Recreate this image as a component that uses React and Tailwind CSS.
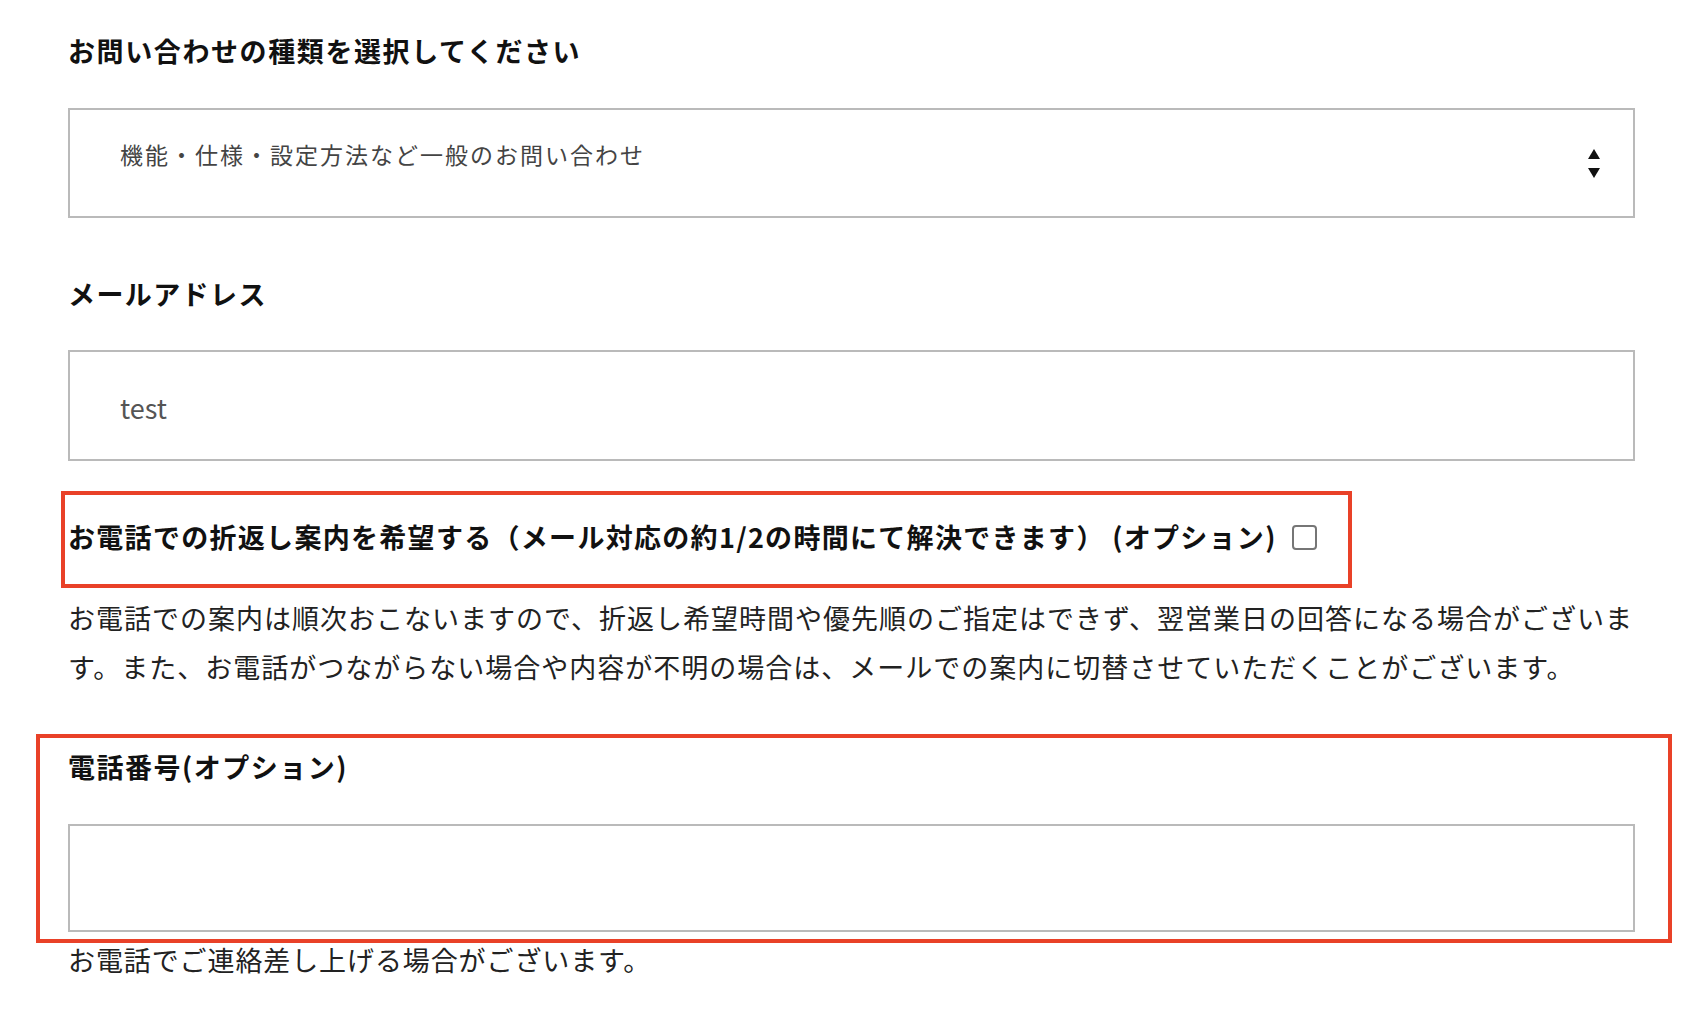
import React from "react";

function Arrows() {
  return (
    <div className="flex flex-col items-center gap-[9px]">
      <svg width="12" height="10" viewBox="0 0 12 10">
        <polygon points="6,0 12,10 0,10" fill="#111" />
      </svg>
      <svg width="12" height="10" viewBox="0 0 12 10">
        <polygon points="0,0 12,0 6,10" fill="#111" />
      </svg>
    </div>
  );
}

export default function App() {
  return (
    <div className="relative w-[1706px] h-[1028px] bg-white overflow-hidden font-['Noto_Sans_CJK_JP','Noto_Sans',sans-serif] text-[#1a1a1a]">
      <div className="ml-[68px] w-[1567px] pt-[31px]">
        <h2 className="h-[40px] leading-[40px] text-[27px] font-bold tracking-[1.6px] text-[#111]">
          お問い合わせの種類を選択してください
        </h2>
        <div className="mt-[37px] h-[110px] border-2 border-[#bababa] flex items-center justify-between pl-[50px] pr-[33px]">
          <span className="mb-[18px] text-[23px] tracking-[2px] text-[#444] leading-[30px]">
            機能・仕様・設定方法など一般のお問い合わせ
          </span>
          <Arrows />
        </div>

        <h2 className="mt-[56px] h-[40px] leading-[40px] text-[27px] font-bold tracking-[1.4px] text-[#111]">
          メールアドレス
        </h2>
        <div className="mt-[36px] h-[111px] border-2 border-[#bababa] flex items-center pl-[50px]">
          <span className="mt-[5px] text-[27px] text-[#555] leading-[30px]">test</span>
        </div>

        <div className="mt-[56px] h-[40px] flex items-center">
          <span className="leading-[40px] text-[27px] font-bold tracking-[1.3px] text-[#111] whitespace-nowrap">
            お電話での折返し案内を希望する（メール対応の約1/2の時間にて解決できます） (オプション)
          </span>
          <span className="ml-[15px] w-[25px] h-[25px] border-2 border-[#767676] rounded-[4px] bg-white"></span>
        </div>

        <p className="mt-[36px] text-[27px] leading-[49px] tracking-[1px] text-[#222]">
          <span className="block whitespace-nowrap">
            お電話での案内は順次おこないますので、折返し希望時間や優先順のご指定はできず、翌営業日の回答になる場合がございま
          </span>
          <span className="block whitespace-nowrap">
            す。また、お電話がつながらない場合や内容が不明の場合は、メールでの案内に切替させていただくことがございます。
          </span>
        </p>

        <h2 className="mt-[56px] h-[40px] leading-[40px] text-[27px] font-bold tracking-[1.5px] text-[#111]">
          電話番号(オプション)
        </h2>
        <div className="mt-[37px] h-[108px] border-2 border-[#bababa]"></div>
        <p className="mt-[8px] leading-[40px] text-[27px] tracking-[0.9px] text-[#222]">
          お電話でご連絡差し上げる場合がございます。
        </p>
      </div>

      <div className="absolute top-[491px] left-[61px] w-[1291px] h-[97px] border-[4px] border-[#e94128] pointer-events-none"></div>
      <div className="absolute top-[734px] left-[36px] w-[1636px] h-[209px] border-[4px] border-[#e94128] pointer-events-none"></div>
    </div>
  );
}
